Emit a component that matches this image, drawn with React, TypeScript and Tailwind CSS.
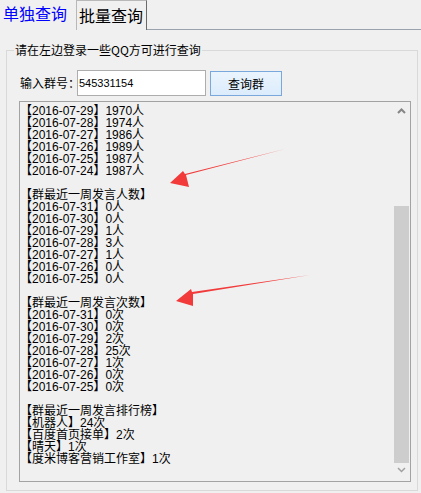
const lines = [
  "【2016-07-29】1970人",
  "【2016-07-28】1974人",
  "【2016-07-27】1986人",
  "【2016-07-26】1989人",
  "【2016-07-25】1987人",
  "【2016-07-24】1987人",
  "",
  "【群最近一周发言人数】",
  "【2016-07-31】0人",
  "【2016-07-30】0人",
  "【2016-07-29】1人",
  "【2016-07-28】3人",
  "【2016-07-27】1人",
  "【2016-07-26】0人",
  "【2016-07-25】0人",
  "",
  "【群最近一周发言次数】",
  "【2016-07-31】0次",
  "【2016-07-30】0次",
  "【2016-07-29】2次",
  "【2016-07-28】25次",
  "【2016-07-27】1次",
  "【2016-07-26】0次",
  "【2016-07-25】0次",
  "",
  "【群最近一周发言排行榜】",
  "【机器人】24次",
  "【百度首页接单】2次",
  "【晴天】1次",
  "【度米博客营销工作室】1次",
];

const font = { fontFamily: '"SimSun", "Noto Sans CJK SC", sans-serif' };
const mixed = { fontFamily: '"Liberation Sans", "Noto Sans CJK SC", sans-serif' };

export default function App() {
  return (
    <div
      className="w-[421px] h-[493px] bg-[#f0f0f0] text-black overflow-hidden"
      style={font}
    >
      {/* tabs */}
      <div className="flex h-[30px]">
        <div className="w-[76px] pl-[3px] pt-[3px] text-[16px] leading-[20px] text-[#0000ff] whitespace-nowrap">
          单独查询
        </div>
        <div className="w-[71px] h-[30px] border-l border-t border-r border-l-[#b8b8b8] border-t-[#b8b8b8] border-r-[#6a6a6a] pl-[2px] pt-[4px] text-[16px] leading-[20px] whitespace-nowrap">
          批量查询
        </div>
        <div className="flex-1 border-b border-[#9aa3ad]" />
      </div>

      {/* group box */}
      <div className="relative ml-[6px] mt-[20px] w-[412px] h-[441px] border border-[#d9d9d9]">
        <div className="absolute left-[7px] -top-[9px] px-[1px] bg-[#f0f0f0] text-[12px] leading-[16px] whitespace-nowrap">
          请在左边登录一些QQ方可进行查询
        </div>

        <div className="flex items-center h-[26px] mt-[19px] ml-[13px]">
          <span className="text-[12px] w-[57px] whitespace-nowrap">输入群号：</span>
          <div
            className="w-[129px] h-[26px] bg-white border border-[#adadad] flex items-center pl-[1px] text-[11px]"
            style={mixed}
          >
            545331154
          </div>
          <button className="ml-[4px] w-[72px] h-[25px] border border-[#7aa7dc] bg-gradient-to-b from-[#eaf4fd] to-[#dcecfc] text-[12px] leading-[23px] text-center">
            查询群
          </button>
        </div>

        {/* text area */}
        <div className="relative mt-[5px] ml-[12px] w-[392px] h-[381px] border border-[#a3a3a3] flex">
          <div
            className="flex-1 pl-0 pt-[3px] text-[12px] leading-[12px] whitespace-pre"
            style={mixed}
          >
            {lines.map((l, i) => (
              <div key={i} className="h-[12px]">
                {l}
              </div>
            ))}
          </div>
          <div className="w-[17px] flex flex-col items-center">
            <svg width="9" height="6" viewBox="0 0 9 6" className="mt-[6px]">
              <path d="M1 5 L4.5 1.5 L8 5" fill="none" stroke="#868686" strokeWidth="2" />
            </svg>
            <div className="mt-[92px] w-[15px] h-[257px] bg-[#cdcdcd]" />
            <svg width="9" height="6" viewBox="0 0 9 6" className="mt-[4px]">
              <path d="M1 1 L4.5 4.5 L8 1" fill="none" stroke="#a0a0a0" strokeWidth="1.5" />
            </svg>
          </div>

          {/* annotation arrows */}
          <svg
            className="absolute -left-[20px] -top-[102px] pointer-events-none"
            width="421"
            height="493"
            viewBox="0 0 421 493"
          >
            <path d="M285 149 L186 175 L189 187 L170 183 L183 171 L185 174 Z" fill="#f23a3a" />
            <path d="M310 275 L193 294 L193 306 L176 301 L191 289 L192 292 Z" fill="#f23a3a" />
          </svg>
        </div>
      </div>
    </div>
  );
}
